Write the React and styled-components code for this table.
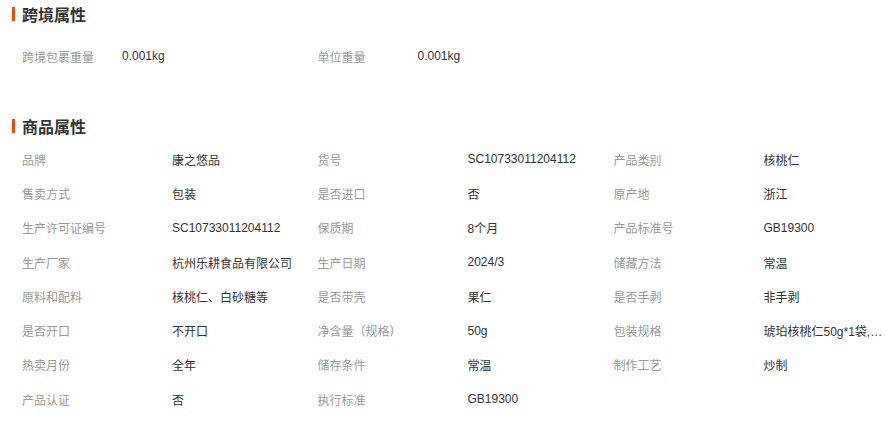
import React from "react";
import styled, { createGlobalStyle } from "styled-components";

const GlobalStyle = createGlobalStyle`
  html, body {
    margin: 0;
    padding: 0;
    background: #fff;
  }
  body {
    font-family: "Liberation Sans", "Noto Sans CJK SC", sans-serif;
    font-size: 12px;
    color: #333;
  }
`;

const crossBorder = [
  ["跨境包裹重量", "0.001kg"],
  ["单位重量", "0.001kg"],
];

const attributes = [
  ["品牌", "康之悠品"],
  ["货号", "SC10733011204112"],
  ["产品类别", "核桃仁"],
  ["售卖方式", "包装"],
  ["是否进口", "否"],
  ["原产地", "浙江"],
  ["生产许可证编号", "SC10733011204112"],
  ["保质期", "8个月"],
  ["产品标准号", "GB19300"],
  ["生产厂家", "杭州乐耕食品有限公司"],
  ["生产日期", "2024/3"],
  ["储藏方法", "常温"],
  ["原料和配料", "核桃仁、白砂糖等"],
  ["是否带壳", "果仁"],
  ["是否手剥", "非手剥"],
  ["是否开口", "不开口"],
  ["净含量（规格）", "50g"],
  ["包装规格", "琥珀核桃仁50g*1袋,共1袋装"],
  ["热卖月份", "全年"],
  ["储存条件", "常温"],
  ["制作工艺", "炒制"],
  ["产品认证", "否"],
  ["执行标准", "GB19300"],
];

export default function App() {
  return (
    <>
      <GlobalStyle />
      <Page>
        <Section>
          <Title>跨境属性</Title>
          <Grid $cols="100px 195.5px 100px 1fr" $top="11px">
            {crossBorder.map(([label, value]) => (
              <React.Fragment key={label}>
                <Label>{label}</Label>
                <Value>{value}</Value>
              </React.Fragment>
            ))}
          </Grid>
        </Section>
        <Section $gap="38.7px">
          <Title>商品属性</Title>
          <Grid $cols="150px 145.5px 150px 146px 150px 1fr" $top="2px">
            {attributes.map(([label, value]) => (
              <React.Fragment key={label}>
                <Label>{label}</Label>
                <Value title={value}>{value}</Value>
              </React.Fragment>
            ))}
          </Grid>
        </Section>
      </Page>
    </>
  );
}

const Page = styled.div`
  width: 885px;
  padding: 0 0 0 12px;
  box-sizing: border-box;
`;

const Section = styled.section`
  margin-top: ${(p) => p.$gap || "0"};
`;

const Title = styled.h3`
  display: flex;
  align-items: center;
  gap: 7px;
  height: 28px;
  margin: 0;
  font-size: 16px;
  font-weight: bold;
  color: #333;

  &::before {
    content: "";
    width: 3px;
    height: 14px;
    background: #ff4400;
  }
`;

const Grid = styled.div`
  display: grid;
  grid-template-columns: ${(p) => p.$cols};
  grid-auto-rows: 34.3px;
  align-items: center;
  margin-top: ${(p) => p.$top};
  padding-left: 10px;
`;

const Label = styled.div`
  color: #999;
  white-space: nowrap;
  overflow: hidden;
`;

const Value = styled.div`
  color: #333;
  white-space: nowrap;
  overflow: hidden;
  text-overflow: ellipsis;
`;
